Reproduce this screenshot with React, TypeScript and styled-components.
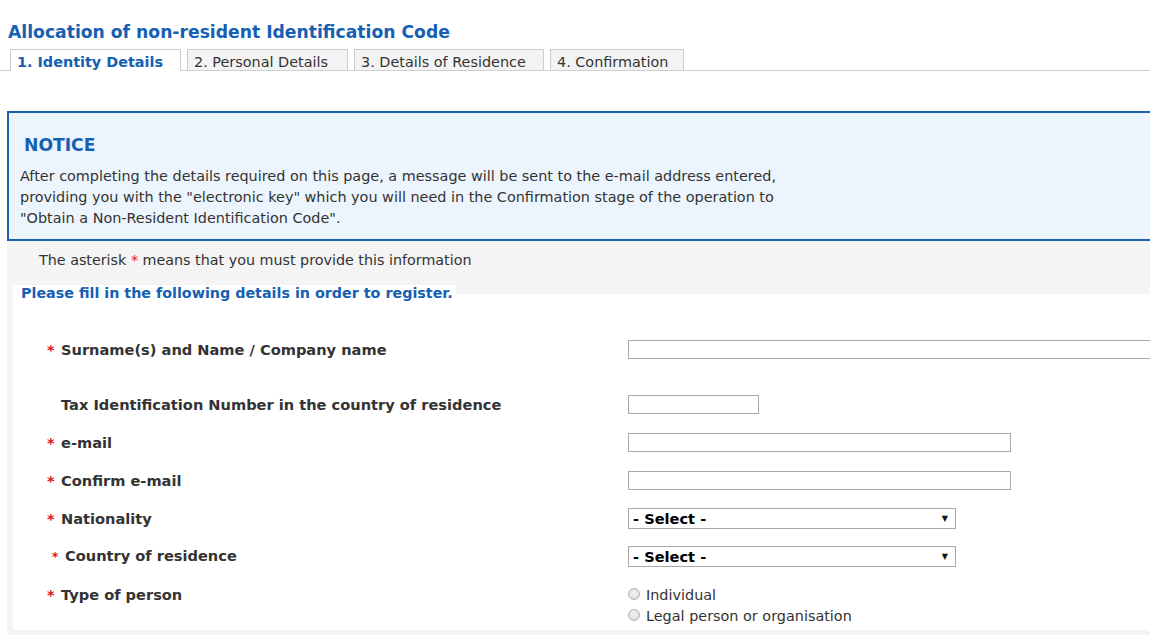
import styled, { createGlobalStyle } from "styled-components";

const GlobalStyle = createGlobalStyle`
  html, body {
    margin: 0;
    padding: 0;
    background: #ffffff;
    overflow: hidden;
  }
  body {
    font-family: "DejaVu Sans", Verdana, sans-serif;
    color: #333333;
  }
`;

const tabs = [
  { label: "1. Identity Details", width: 171 },
  { label: "2. Personal Details", width: 161 },
  { label: "3. Details of Residence", width: 190 },
  { label: "4. Confirmation", width: 134 },
];

const App = () => {
  return (
    <Page>
      <GlobalStyle />
      <Title>Allocation of non-resident Identification Code</Title>
      <TabBar>
        {tabs.map((t, i) => (
          <Tab key={t.label} $active={i === 0} $width={t.width}>
            {t.label}
          </Tab>
        ))}
      </TabBar>

      <Notice>
        <NoticeTitle>NOTICE</NoticeTitle>
        <NoticeText>
          After completing the details required on this page, a message will be
          sent to the e-mail address entered,
          <br />
          providing you with the "electronic key" which you will need in the
          Confirmation stage of the operation to
          <br />
          "Obtain a Non-Resident Identification Code".
        </NoticeText>
      </Notice>

      <Content>
        <Hint>
          The asterisk <HintStar>*</HintStar> means that you must provide this
          information
        </Hint>
        <Fieldset>
          <Legend>Please fill in the following details in order to register.</Legend>

          <Row $gapAfter={17}>
            <Label>
              <Star>*</Star>
              Surname(s) and Name / Company name
            </Label>
            <TextInput $width={530} />
          </Row>

          <Row>
            <Label>
              <Blank />
              Tax Identification Number in the country of residence
            </Label>
            <TextInput $width={131} />
          </Row>

          <Row>
            <Label>
              <Star>*</Star>
              e-mail
            </Label>
            <TextInput $width={383} />
          </Row>

          <Row>
            <Label>
              <Star>*</Star>
              Confirm e-mail
            </Label>
            <TextInput $width={383} />
          </Row>

          <Row>
            <Label>
              <Star>*</Star>
              Nationality
            </Label>
            <Select>
              <span>- Select -</span>
              <Arrow>▼</Arrow>
            </Select>
          </Row>

          <Row>
            <Label>
              <SmallStar>*</SmallStar>
              Country of residence
            </Label>
            <Select>
              <span>- Select -</span>
              <Arrow>▼</Arrow>
            </Select>
          </Row>

          <TopRow>
            <Label>
              <Star>*</Star>
              Type of person
            </Label>
            <Radios>
              <RadioLine>
                <Radio />
                Individual
              </RadioLine>
              <RadioLine>
                <Radio />
                Legal person or organisation
              </RadioLine>
            </Radios>
          </TopRow>
        </Fieldset>
      </Content>
    </Page>
  );
};

export default App;

const Page = styled.div`
  width: 1150px;
  height: 635px;
  overflow: hidden;
`;

const Title = styled.h1`
  margin: 0;
  padding: 22px 0 0 8px;
  font-size: 17.2px;
  line-height: 20px;
  font-weight: bold;
  color: #1560b3;
`;

const TabBar = styled.div`
  display: flex;
  gap: 6px;
  margin-top: 7px;
  padding-left: 10px;
  border-bottom: 1px solid #cfcfcf;
  height: 21px;
`;

const Tab = styled.div<{ $active?: boolean; $width: number }>`
  width: ${(p) => p.$width}px;
  box-sizing: border-box;
  height: 21px;
  padding: 0 0 0 6px;
  border: 1px solid #cccccc;
  border-bottom: none;
  background: ${(p) => (p.$active ? "#ffffff" : "#f3f3f3")};
  color: ${(p) => (p.$active ? "#1560b3" : "#333333")};
  font-weight: ${(p) => (p.$active ? "bold" : "normal")};
  font-size: 14.4px;
  line-height: 24px;
  white-space: nowrap;
  ${(p) => (p.$active ? "margin-bottom: -1px; height: 22px;" : "")}
`;

const Notice = styled.div`
  margin: 40px 0 0 7px;
  height: 130px;
  box-sizing: border-box;
  border: 2px solid #1a62b0;
  border-right: none;
  background: #ecf5fd;
  padding: 21px 0 0 11px;
`;

const NoticeTitle = styled.div`
  font-size: 17.2px;
  font-weight: bold;
  color: #1560b3;
  padding-left: 4px;
  line-height: 22px;
`;

const NoticeText = styled.p`
  margin: 10px 0 0;
  font-size: 14.4px;
  line-height: 21px;
  color: #333333;
  white-space: nowrap;
`;

const Content = styled.div`
  margin-left: 7px;
  background: #f4f4f4;
  padding: 9px 0 7px 6px;
`;

const Hint = styled.div`
  font-size: 14.3px;
  line-height: 20px;
  padding-left: 26px;
  color: #333333;
`;

const HintStar = styled.span`
  color: #e0101a;
`;

const Star = styled.span`
  color: #e0101a;
  display: inline-block;
  width: 14px;
`;

const SmallStar = styled(Star)`
  font-size: 12px;
  padding-left: 5px;
  width: 13px;
`;

const Blank = styled.span`
  display: inline-block;
  width: 14px;
`;

const Fieldset = styled.fieldset`
  margin: 15px 0 0;
  padding: 28px 0 3px 0;
  border: none;
  background: #ffffff;
  min-width: 0;
`;

const Legend = styled.legend`
  background: #ffffff;
  padding: 0 3px 0 8px;
  font-size: 14.3px;
  line-height: 17px;
  font-weight: bold;
  color: #1560b3;
  white-space: nowrap;
`;

const Row = styled.div<{ $gapAfter?: number }>`
  display: flex;
  align-items: center;
  height: 38px;
  margin-bottom: ${(p) => p.$gapAfter ?? 0}px;
`;

const TopRow = styled(Row)`
  align-items: flex-start;
  height: auto;
  padding-top: 10px;
`;

const Label = styled.div`
  width: 615px;
  flex-shrink: 0;
  box-sizing: border-box;
  padding-left: 34px;
  font-size: 14.6px;
  font-weight: bold;
  line-height: 19px;
  color: #333333;
  white-space: nowrap;
`;

const TextInput = styled.div<{ $width: number }>`
  width: ${(p) => p.$width}px;
  height: 19px;
  box-sizing: border-box;
  border: 1px solid #a9a9a9;
  background: #ffffff;
  flex-shrink: 0;
`;

const Select = styled.div`
  width: 328px;
  height: 21px;
  box-sizing: border-box;
  border: 1px solid #a9a9a9;
  display: flex;
  align-items: center;
  justify-content: space-between;
  padding: 0 7px 0 4px;
  font-size: 14.6px;
  font-weight: bold;
  color: #000000;
`;

const Arrow = styled.span`
  font-size: 8px;
  color: #111111;
`;

const Radios = styled.div`
  display: flex;
  flex-direction: column;
  margin-top: 0;
`;

const RadioLine = styled.div`
  display: flex;
  align-items: center;
  gap: 6px;
  font-size: 14.4px;
  line-height: 21px;
  color: #333333;
  white-space: nowrap;
`;

const Radio = styled.span`
  width: 12px;
  height: 12px;
  border-radius: 50%;
  box-sizing: border-box;
  border: 1px solid #b4b4b4;
  background: radial-gradient(circle at 50% 40%, #f4f4f4, #d6d6d6);
  margin-top: -4px;
`;
